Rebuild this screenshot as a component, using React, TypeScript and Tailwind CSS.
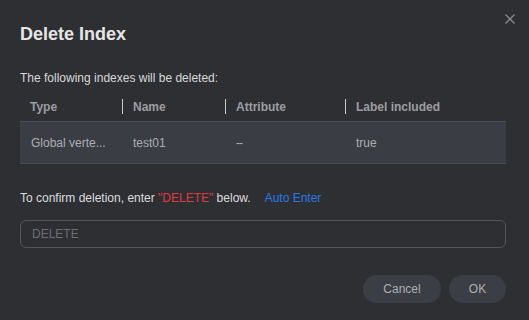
import React from "react";

const columns = [
  { key: "type", label: "Type", width: "w-[102px]" },
  { key: "name", label: "Name", width: "w-[103px]" },
  { key: "attr", label: "Attribute", width: "w-[120px]" },
  { key: "label", label: "Label included", width: "flex-1" },
];

const row = ["Global verte...", "test01", "--", "true"];

export default function App() {
  return (
    <div
      className="relative w-[529px] h-[320px] bg-[#2e2f33] px-[20px] pr-[23px] pt-[22px] text-[12px]"
      style={{ fontFamily: '"Liberation Sans", Arial, sans-serif' }}
    >
      <button className="absolute right-[13px] top-[13px] flex h-[12px] w-[12px] items-center justify-center text-[#8a8b8f]">
        <svg width="10" height="10" viewBox="0 0 10 10" fill="none">
          <path d="M0.5 0.5L9.5 9.5M9.5 0.5L0.5 9.5" stroke="currentColor" strokeWidth="1.3" />
        </svg>
      </button>

      <h2 className="h-[24px] text-[18px] font-bold leading-[24px] text-[#e6e6e6]">
        Delete Index
      </h2>

      <p className="mt-[23px] leading-[18px] text-[#d9d9da]">
        The following indexes will be deleted:
      </p>

      <div className="mt-[5px]">
        <div className="flex h-[29px] items-center">
          {columns.map((c, i) => (
            <div key={c.key} className={`flex h-full items-center ${c.width}`}>
              {i > 0 && <div className="h-[15px] w-px bg-[#c9cacd]" />}
              <span className="pl-[10px] font-bold leading-[18px] text-[#9c9da1]">
                {c.label}
              </span>
            </div>
          ))}
        </div>
        <div className="flex h-[43px] items-center border-y border-[#4b4d55] bg-[#3b3d45]">
          {columns.map((c, i) => (
            <div key={c.key} className={`flex items-center pl-[11px] ${c.width}`}>
              <span className={`leading-[18px] text-[#acadb1] ${row[i] === "--" ? "tracking-[-1px]" : ""}`}>
                {row[i]}
              </span>
            </div>
          ))}
        </div>
      </div>

      <p className="mt-[25px] leading-[18px] text-[#dcdcdd]">
        To confirm deletion, enter <span className="text-[#e0393e]">"DELETE"</span> below.
        <span className="ml-[14px] cursor-pointer text-[#2a78e4]">Auto Enter</span>
      </p>

      <input
        placeholder="DELETE"
        className="mt-[13px] h-[28px] w-full rounded-[6px] border border-[#55565c] bg-transparent px-[11px] text-[12px] text-[#dcdcdd] outline-none placeholder:text-[#6c6d72]"
      />

      <div className="mt-[27px] flex justify-end gap-[8px]">
        <button className="h-[28px] w-[78px] rounded-full bg-[#3c3e46] text-[12px] text-[#adaeb2]">
          Cancel
        </button>
        <button className="h-[28px] w-[57px] rounded-full bg-[#3c3e46] text-[12px] text-[#adaeb2]">
          OK
        </button>
      </div>
    </div>
  );
}
